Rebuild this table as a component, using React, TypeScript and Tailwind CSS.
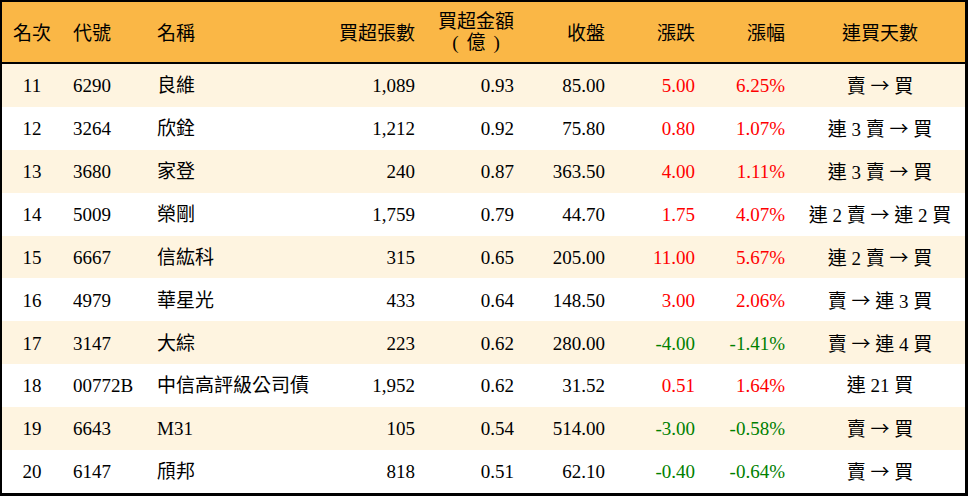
import React from 'react';

type Row = {
  rank: number;
  code: string;
  name: string;
  lots: string;
  amount: string;
  close: string;
  change: string;
  pct: string;
  streak: string;
};

const rows: Row[] = [
  { rank: 11, code: '6290', name: '良維', lots: '1,089', amount: '0.93', close: '85.00', change: '5.00', pct: '6.25%', streak: '賣 → 買' },
  { rank: 12, code: '3264', name: '欣銓', lots: '1,212', amount: '0.92', close: '75.80', change: '0.80', pct: '1.07%', streak: '連 3 賣 → 買' },
  { rank: 13, code: '3680', name: '家登', lots: '240', amount: '0.87', close: '363.50', change: '4.00', pct: '1.11%', streak: '連 3 賣 → 買' },
  { rank: 14, code: '5009', name: '榮剛', lots: '1,759', amount: '0.79', close: '44.70', change: '1.75', pct: '4.07%', streak: '連 2 賣 → 連 2 買' },
  { rank: 15, code: '6667', name: '信紘科', lots: '315', amount: '0.65', close: '205.00', change: '11.00', pct: '5.67%', streak: '連 2 賣 → 買' },
  { rank: 16, code: '4979', name: '華星光', lots: '433', amount: '0.64', close: '148.50', change: '3.00', pct: '2.06%', streak: '賣 → 連 3 買' },
  { rank: 17, code: '3147', name: '大綜', lots: '223', amount: '0.62', close: '280.00', change: '-4.00', pct: '-1.41%', streak: '賣 → 連 4 買' },
  { rank: 18, code: '00772B', name: '中信高評級公司債', lots: '1,952', amount: '0.62', close: '31.52', change: '0.51', pct: '1.64%', streak: '連 21 買' },
  { rank: 19, code: '6643', name: 'M31', lots: '105', amount: '0.54', close: '514.00', change: '-3.00', pct: '-0.58%', streak: '賣 → 買' },
  { rank: 20, code: '6147', name: '頎邦', lots: '818', amount: '0.51', close: '62.10', change: '-0.40', pct: '-0.64%', streak: '賣 → 買' },
];

const cols = 'grid grid-cols-[60px_85px_173px_105px_99px_91px_90px_90px_170px] items-center';

// the arrow looks like the full-width one from a CJK font
function Streak({ text }: { text: string }) {
  const parts = text.split('→');
  return (
    <>
      {parts.map((p, i) => (
        <React.Fragment key={i}>
          {i > 0 && <span style={{ fontFamily: '"Noto Sans CJK TC", sans-serif' }}>→</span>}
          {p}
        </React.Fragment>
      ))}
    </>
  );
}

export default function App() {
  return (
    <div
      className="w-[968px] h-[496px] bg-white text-black text-[19px] border-t-2 border-l-2 border-r-[3px] border-b-[3px] border-black"
      style={{ fontFamily: '"Liberation Serif", "Noto Sans CJK TC", serif' }}
    >
      {/* header */}
      <div className={`${cols} h-[62px] pt-1 bg-[#fab746] border-b-2 border-black`}>
        <div className="text-center">名次</div>
        <div className="pl-[11px]">代號</div>
        <div className="pl-[10px]">名稱</div>
        <div className="text-right pr-[10px]">買超張數</div>
        <div className="text-right pr-[10px]">
          <div className="inline-block text-center leading-[21px]">
            買超金額
            <br />
            <span className="mr-[8px]">(</span>億<span className="ml-[8px]">)</span>
          </div>
        </div>
        <div className="text-right pr-[10px]">收盤</div>
        <div className="text-right pr-[10px]">漲跌</div>
        <div className="text-right pr-[10px]">漲幅</div>
        <div className="text-center">連買天數</div>
      </div>

      {rows.map((r, i) => {
        const tone = r.change.startsWith('-') ? 'text-[#008000]' : 'text-[#ff0000]';
        return (
          <div key={r.rank} className={`${cols} h-[42.9px] pt-[2px] ${i % 2 === 0 ? 'bg-[#fef4e0]' : 'bg-white'}`}>
            <div className="text-center">{r.rank}</div>
            <div className="pl-[11px]">{r.code}</div>
            <div className="pl-[10px] whitespace-nowrap">{r.name}</div>
            <div className="text-right pr-[10px]">{r.lots}</div>
            <div className="text-right pr-[10px]">{r.amount}</div>
            <div className="text-right pr-[10px]">{r.close}</div>
            <div className={`text-right pr-[10px] ${tone}`}>{r.change}</div>
            <div className={`text-right pr-[10px] ${tone}`}>{r.pct}</div>
            <div className="text-center whitespace-nowrap">
              <Streak text={r.streak} />
            </div>
          </div>
        );
      })}
    </div>
  );
}
